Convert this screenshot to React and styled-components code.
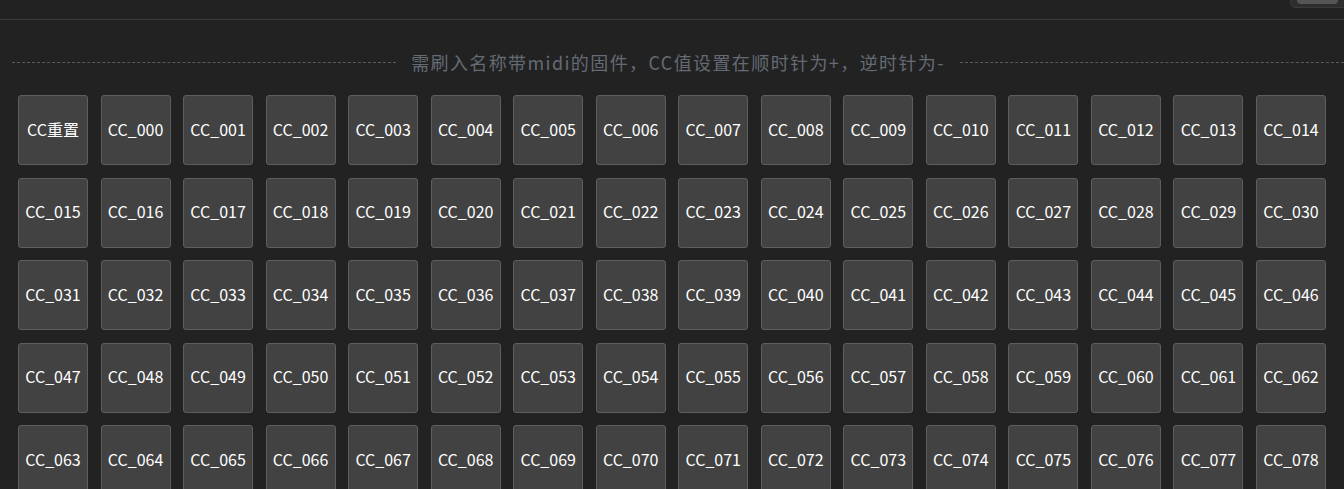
import React from "react";
import styled, { createGlobalStyle } from "styled-components";

const Global = createGlobalStyle`
  html, body { margin: 0; padding: 0; background: #222222; }
  body { font-family: "Noto Sans CJK SC", "Noto Sans", sans-serif; overflow: hidden; }
`;

const Page = styled.div`
  width: 1344px;
  height: 489px;
  background: #222222;
  position: relative;
  overflow: hidden;
`;

const TopBar = styled.div`
  height: 19px;
  border-bottom: 1px solid #3c3c3c;
  position: relative;
`;

const CornerButton = styled.div`
  position: absolute;
  right: -10px;
  top: -20px;
  width: 62px;
  height: 26px;
  border-radius: 5px;
  background: #2e2e2e;
  border: 1px solid #3a3a3a;
  &::after {
    content: "";
    position: absolute;
    left: 6px;
    right: 15px;
    bottom: 3px;
    height: 20px;
    border-radius: 4px;
    background: #555555;
  }
`;

const Divider = styled.div`
  display: flex;
  align-items: center;
  margin: 31px 0 0 12px;
  height: 22px;
  &::before, &::after {
    content: "";
    flex: 1;
    border-top: 1px dashed #5a5a5a;
  }
`;

const DividerText = styled.span`
  padding: 0 15px;
  font-size: 18px;
  letter-spacing: 1.4px;
  color: #646b74;
  white-space: nowrap;
  line-height: 22px;
`;

const Grid = styled.div`
  display: grid;
  grid-template-columns: repeat(16, 70px);
  justify-content: space-between;
  row-gap: 12.5px;
  padding: 22px 18px 0 18px;
`;

const CCButton = styled.button`
  width: 70px;
  height: 70px;
  box-sizing: border-box;
  padding: 0 0 3px 0;
  background: #424242;
  border: 1px solid #5e5e5e;
  border-radius: 3px;
  color: #ffffff;
  font-family: "Noto Sans CJK SC", "Noto Sans", sans-serif;
  font-size: 16px;
  display: flex;
  align-items: center;
  justify-content: center;
  cursor: pointer;
`;

const labels = ["CC重置"];
for (let i = 0; i <= 78; i++) labels.push("CC_" + String(i).padStart(3, "0"));

export default function App() {
  return (
    <Page>
      <Global />
      <TopBar>
        <CornerButton />
      </TopBar>
      <Divider>
        <DividerText>需刷入名称带midi的固件，CC值设置在顺时针为+，逆时针为-</DividerText>
      </Divider>
      <Grid>
        {labels.map((l) => (
          <CCButton key={l}>{l}</CCButton>
        ))}
      </Grid>
    </Page>
  );
}
